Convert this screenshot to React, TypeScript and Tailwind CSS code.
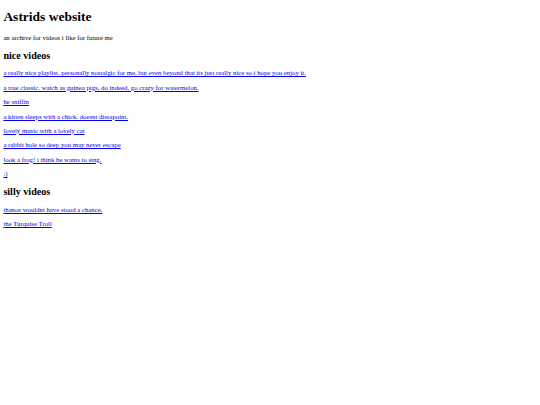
const niceVideos = [
  'a really nice playlist. personally nostalgic for me, but even beyond that its just really nice so i hope you enjoy it.',
  'a true classic. watch as guinea pigs, do indeed, go crazy for watermelon.',
  'he sniffin',
  'a kitten sleeps with a chick. doesnt dissapoint.',
  'lovely music with a lovely cat',
  'a rabbit hole so deep you may never escape',
  'look a frog! i think he wants to sing.',
  ':)',
]

const sillyVideos = ['thanos wouldnt have stood a chance.', 'the Turquise Troll']

const VideoLink = ({ label }: { label: string }) => (
  <p className="my-[6.7px] text-[6.75px] leading-[1.14]">
    <a href="#" className="text-[#0000ee] underline">
      {label}
    </a>
  </p>
)

export default function App() {
  return (
    <div className="min-h-screen bg-white px-[3.375px] text-black font-['Liberation_Serif','Times_New_Roman',serif]">
      <h1 className="my-[9px] text-[13.5px] font-bold leading-[1.15]">Astrids website</h1>
      <p className="my-[6.7px] text-[6.75px] leading-[1.14]">an archive for videos i like for future me</p>

      <h2 className="my-[8.35px] text-[10.125px] font-bold leading-[1.14]">nice videos</h2>
      {niceVideos.map((v) => (
        <VideoLink key={v} label={v} />
      ))}

      <h2 className="my-[8.35px] text-[10.125px] font-bold leading-[1.14]">silly videos</h2>
      {sillyVideos.map((v) => (
        <VideoLink key={v} label={v} />
      ))}
    </div>
  )
}
